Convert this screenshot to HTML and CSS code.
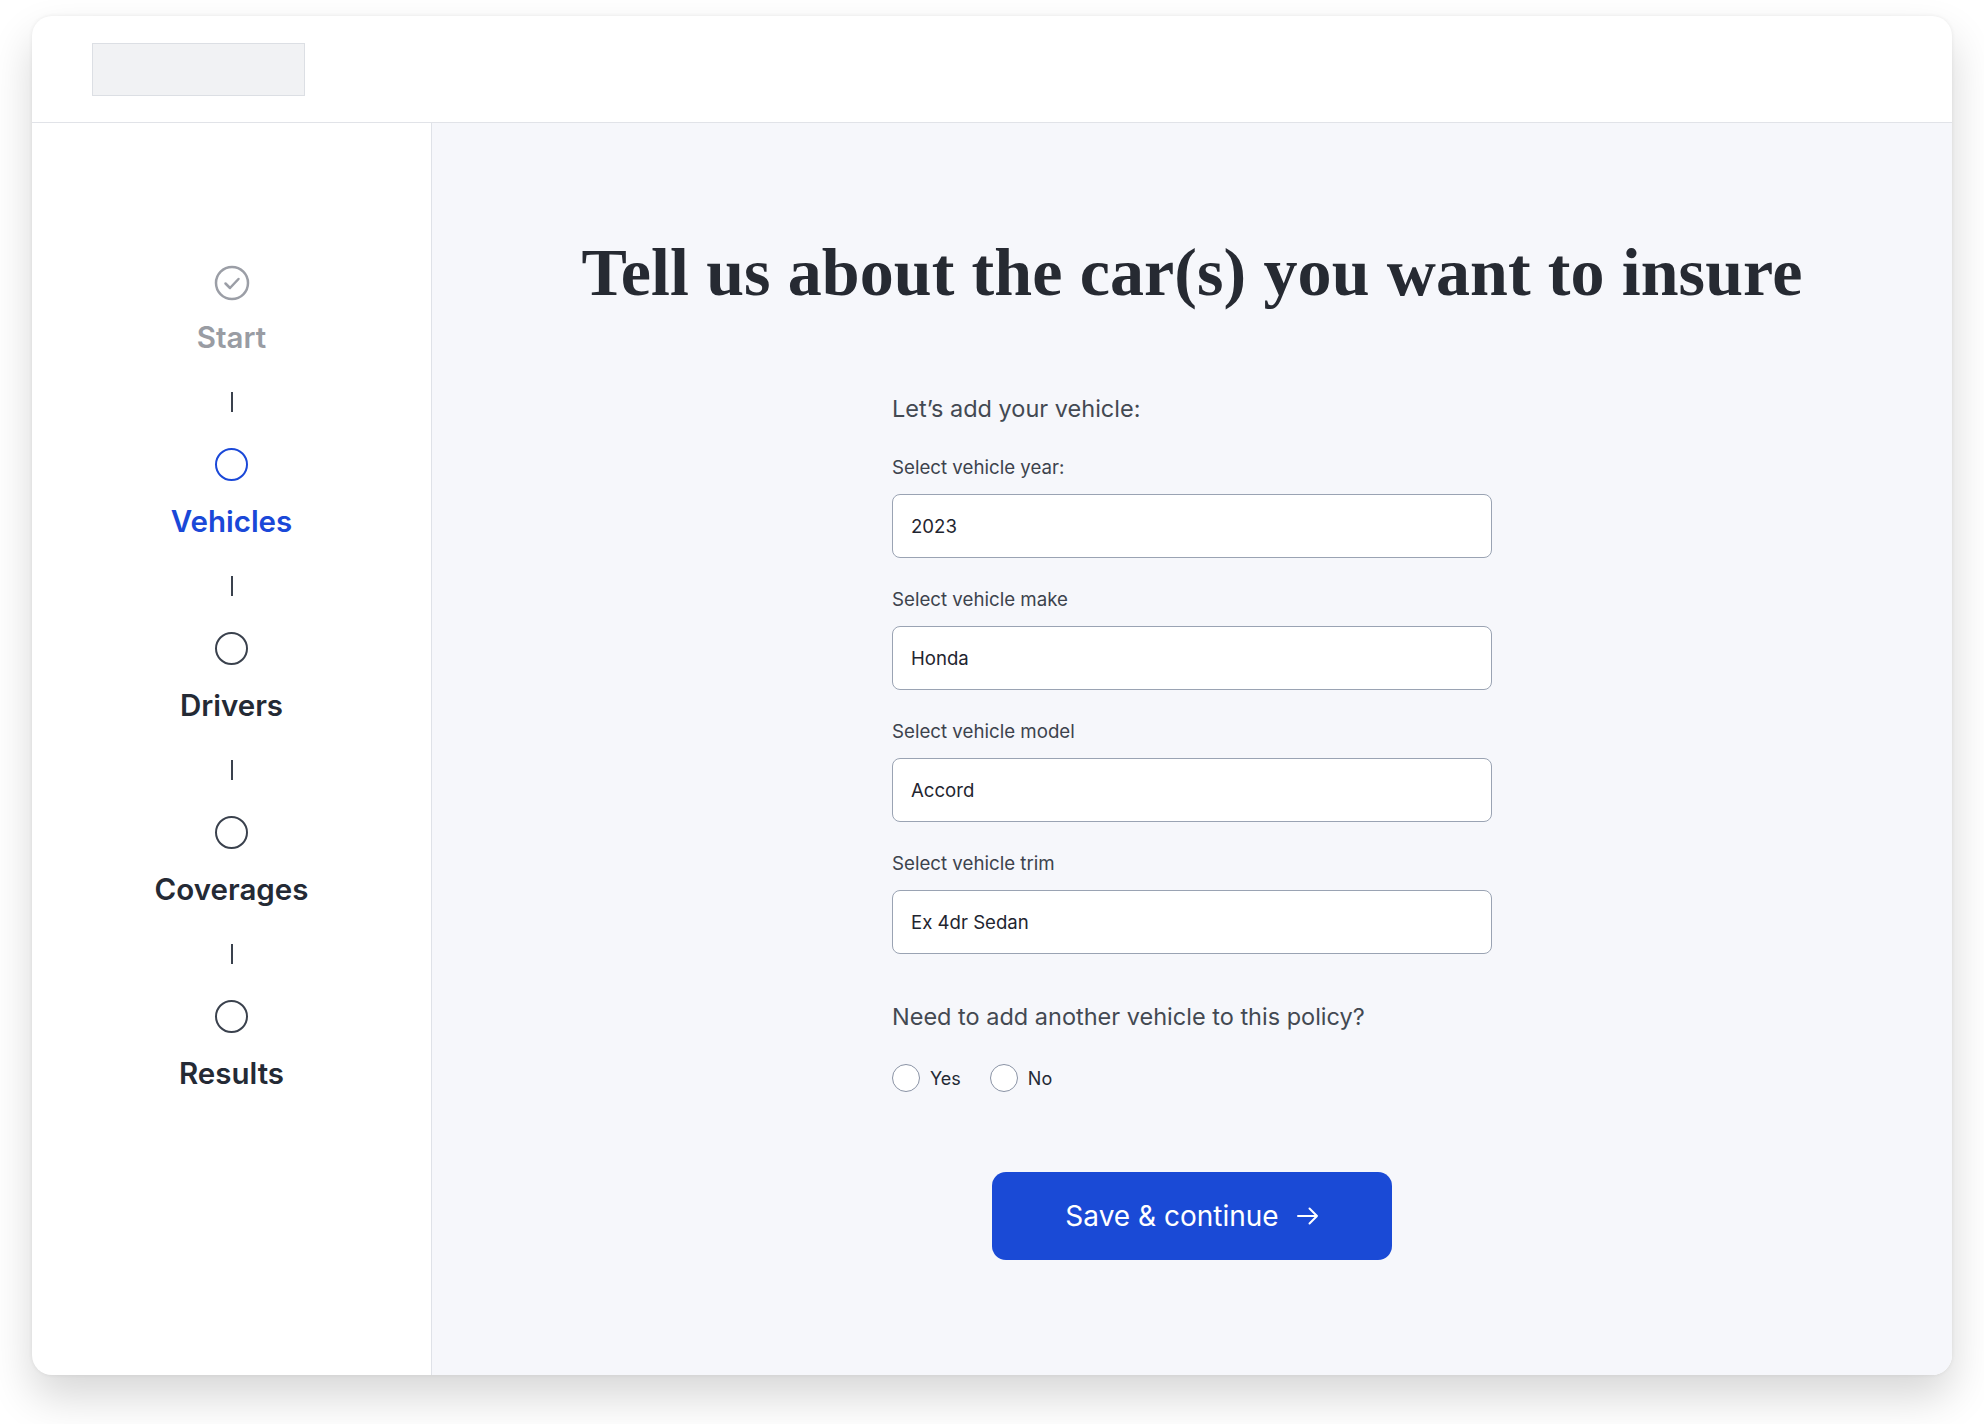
FILE: index.html
```html
<!DOCTYPE html>
<html lang="en">
<head>
    <meta charset="UTF-8">
    <meta name="viewport" content="width=device-width, initial-scale=1.0">
    <title>Get a quote - Vehicles</title>
    <link rel="stylesheet" href="styles.css">
</head>
<body>

    <div class="card">
        <!-- Top bar with logo placeholder -->
        <header class="topbar">
            <div class="logo-slot"></div>
        </header>

        <div class="layout">
            <!-- Progress steps -->
            <aside class="stepper">
                <ol class="steps">
                    <li class="step done">
                        <svg class="step-check" width="36" height="36" viewBox="0 0 36 36" fill="none">
                            <circle cx="18" cy="18" r="16" stroke="currentColor" stroke-width="2.5"/>
                            <path d="M11.5 18.5l4.5 4.5 8.5-9" stroke="currentColor" stroke-width="2.5" stroke-linecap="round" stroke-linejoin="round"/>
                        </svg>
                        <span class="step-label">Start</span>
                    </li>
                    <li class="connector"></li>
                    <li class="step current">
                        <span class="step-dot"></span>
                        <span class="step-label">Vehicles</span>
                    </li>
                    <li class="connector"></li>
                    <li class="step">
                        <span class="step-dot"></span>
                        <span class="step-label">Drivers</span>
                    </li>
                    <li class="connector"></li>
                    <li class="step">
                        <span class="step-dot"></span>
                        <span class="step-label">Coverages</span>
                    </li>
                    <li class="connector"></li>
                    <li class="step">
                        <span class="step-dot"></span>
                        <span class="step-label">Results</span>
                    </li>
                </ol>
            </aside>

            <main class="content">
                <h1 class="title">Tell us about the car(s) you want to insure</h1>

                <form class="vehicle-form">
                    <p class="intro">Let’s add your vehicle:</p>

                    <div class="field">
                        <label for="year">Select vehicle year:</label>
                        <input id="year" type="text" value="2023">
                    </div>
                    <div class="field">
                        <label for="make">Select vehicle make</label>
                        <input id="make" type="text" value="Honda">
                    </div>
                    <div class="field">
                        <label for="model">Select vehicle model</label>
                        <input id="model" type="text" value="Accord">
                    </div>
                    <div class="field">
                        <label for="trim">Select vehicle trim</label>
                        <input id="trim" type="text" value="Ex 4dr Sedan">
                    </div>

                    <p class="question">Need to add another vehicle to this policy?</p>
                    <div class="choices">
                        <label class="choice"><span class="radio"></span>Yes</label>
                        <label class="choice"><span class="radio"></span>No</label>
                    </div>

                    <div class="actions">
                        <button type="button" class="btn-primary">
                            Save &amp; continue
                            <svg width="22" height="18" viewBox="0 0 22 18" fill="none">
                                <path d="M1 9h19M12.5 1.5L20 9l-7.5 7.5" stroke="currentColor" stroke-width="2" stroke-linecap="round" stroke-linejoin="round"/>
                            </svg>
                        </button>
                    </div>
                </form>
            </main>
        </div>
    </div>

</body>
</html>
```

FILE: styles.css
```css
body {
    margin: 0;
    padding: 16px 32px 49px 32px;
    background-color: #ffffff;
    font-family: Inter, "Noto Sans", Arial, sans-serif;
    color: #1f2530;
}

/* Outer rounded card */
.card {
    height: 1359px;
    display: flex;
    flex-direction: column;
    background-color: #ffffff;
    border-radius: 20px;
    overflow: hidden;
    box-shadow: 0 22px 44px rgba(0, 0, 0, 0.16), 0 0 4px rgba(0, 0, 0, 0.07);
}

.topbar {
    border-bottom: 1px solid #e1e3e8;
    padding: 27px 60px 0 60px;
    height: 79px;
}

.logo-slot {
    width: 211px;
    height: 51px;
    background-color: #f1f2f4;
    border: 1px solid #dcdfe4;
}

.layout {
    flex: 1;
    display: grid;
    grid-template-columns: 400px 1fr;
}

/* Sidebar stepper */
.stepper {
    border-right: 1px solid #dfe2e8;
    padding-top: 142px;
}

.steps {
    list-style: none;
    margin: 0;
    padding: 0;
    display: flex;
    flex-direction: column;
    align-items: center;
}

.step {
    display: flex;
    flex-direction: column;
    align-items: center;
    color: #242a35;
}

.step-dot {
    width: 29px;
    height: 29px;
    border: 2.5px solid #3a414d;
    border-radius: 50%;
    margin-bottom: 23px;
}

.step-check {
    display: block;
    margin-bottom: 19px;
    color: #9b9ea6;
}

.step-label {
    font-size: 29.5px;
    font-weight: 600;
    line-height: 34px;
}

.step.done .step-label {
    color: #999ca3;
}

.step.current {
    color: #1a48d8;
}

.step.current .step-dot {
    border-color: #1a48d8;
}

.connector {
    width: 2px;
    height: 20px;
    background-color: #3a414d;
    margin: 38px 0 36px 0;
}

/* Main content */
.content {
    background-color: #f6f7fb;
    padding-top: 112px;
}

.title {
    margin: 0;
    text-align: center;
    font-family: "Liberation Serif", "Times New Roman", serif;
    font-size: 68px;
    font-weight: 700;
    line-height: 75px;
    letter-spacing: 0.1px;
    color: #262a32;
}

.vehicle-form {
    width: 600px;
    margin: 84px auto 0 auto;
}

.intro,
.question {
    margin: 0;
    font-size: 23.5px;
    line-height: 30px;
    color: #434952;
}

.intro {
    margin-bottom: 32px;
}

.field {
    display: flex;
    flex-direction: column;
    margin-bottom: 30px;
}

.field label {
    font-size: 18.7px;
    line-height: 24px;
    color: #3d434d;
    margin-bottom: 14px;
}

.field input {
    height: 64px;
    box-sizing: border-box;
    padding: 0 18px;
    border: 1px solid #9aa3b3;
    border-radius: 8px;
    background-color: #ffffff;
    font-family: Inter, "Noto Sans", Arial, sans-serif;
    font-size: 18.6px;
    color: #1f2530;
    outline: none;
}

.question {
    margin-top: 48px;
}

.choices {
    display: flex;
    gap: 29px;
    margin-top: 32px;
}

.choice {
    display: flex;
    align-items: center;
    gap: 10px;
    font-size: 18px;
    color: #242a35;
}

.radio {
    width: 26px;
    height: 26px;
    border: 1px solid #8a93a5;
    border-radius: 50%;
    background-color: #ffffff;
}

.actions {
    display: flex;
    justify-content: center;
    margin-top: 80px;
}

.btn-primary {
    width: 400px;
    height: 88px;
    display: flex;
    align-items: center;
    justify-content: center;
    gap: 18px;
    border: none;
    border-radius: 14px;
    background-color: #1a4ad6;
    color: #ffffff;
    font-family: Inter, "Noto Sans", Arial, sans-serif;
    font-size: 28px;
    cursor: pointer;
}
```
